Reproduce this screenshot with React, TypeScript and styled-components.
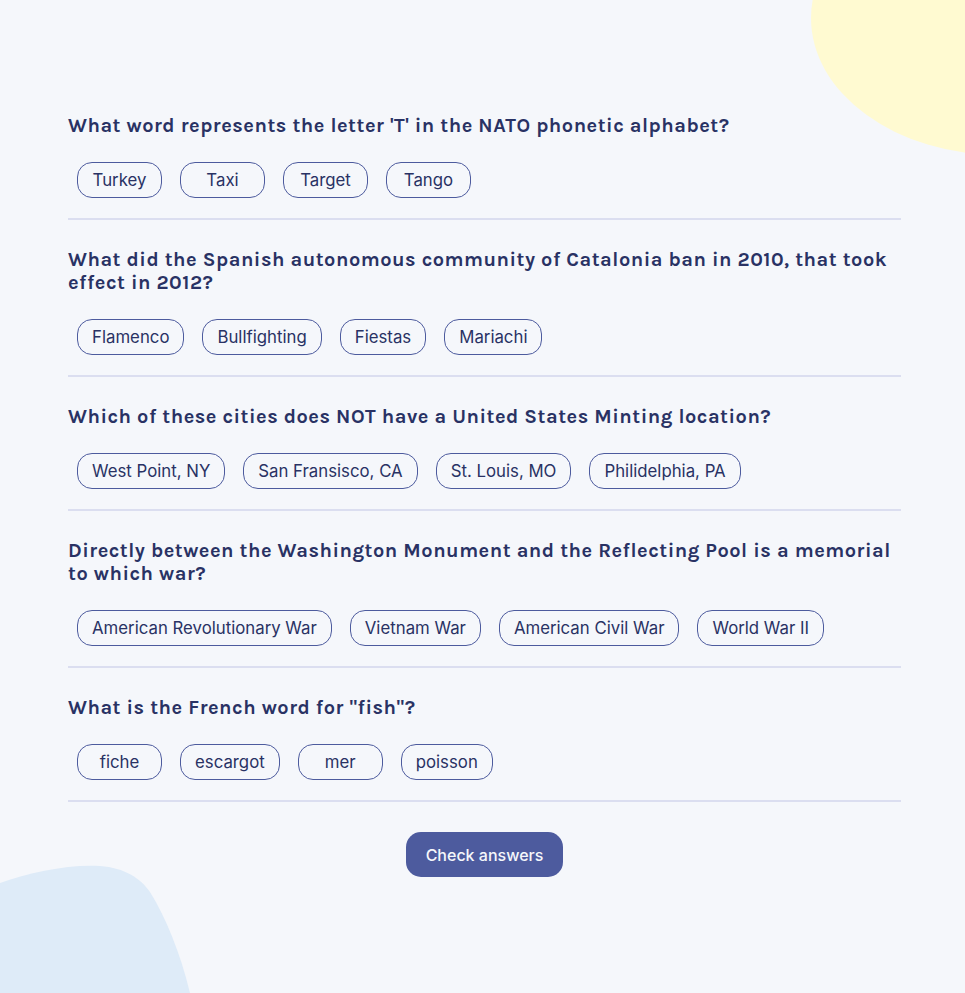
import React from "react";
import styled, { createGlobalStyle } from "styled-components";

const GlobalStyle = createGlobalStyle`
  html, body {
    margin: 0;
    padding: 0;
    background: #F5F7FB;
  }
  * { box-sizing: border-box; }
`;

const Page = styled.div`
  position: relative;
  width: 965px;
  height: 993px;
  overflow: hidden;
  background: #F5F7FB;
  font-family: Inter, "Noto Sans", sans-serif;
  color: #293264;
`;

const Blob = styled.svg<{ $corner: "tr" | "bl" }>`
  position: absolute;
  ${(p) => (p.$corner === "tr" ? "top: 0; right: 0;" : "bottom: 0; left: 0;")}
  pointer-events: none;
`;

const Quiz = styled.main`
  position: relative;
  width: 833px;
  margin-left: 68px;
  padding-top: 86px;
  display: flex;
  flex-direction: column;
`;

const Section = styled.section`
  padding: 28px 0 20px;
  border-bottom: 2px solid #DBDEF0;
`;

const Question = styled.h2`
  margin: 0 0 25px;
  font-family: "Karla", Lato, "Noto Sans", sans-serif;
  font-weight: 700;
  font-size: 20px;
  line-height: 23px;
  letter-spacing: 0.5px;
  color: #293264;
`;

const Answers = styled.div`
  display: flex;
  gap: 18px;
  padding-left: 9px;
`;

const Answer = styled.button`
  height: 36px;
  min-width: 85px;
  padding: 0 14px;
  border: 1px solid #4D5B9E;
  border-radius: 15px;
  background: transparent;
  font-family: Inter, sans-serif;
  font-size: 16.8px;
  font-weight: 400;
  color: #293264;
  cursor: pointer;
`;

const Footer = styled.div`
  display: flex;
  justify-content: center;
  padding-top: 30px;
`;

const CheckButton = styled.button`
  height: 45px;
  width: 157px;
  border: none;
  border-radius: 15px;
  background: #4D5B9E;
  color: #F5F7FB;
  font-family: Inter, sans-serif;
  font-size: 16px;
  font-weight: 500;
  cursor: pointer;
`;

const questions = [
  {
    q: "What word represents the letter 'T' in the NATO phonetic alphabet?",
    a: ["Turkey", "Taxi", "Target", "Tango"],
  },
  {
    q: "What did the Spanish autonomous community of Catalonia ban in 2010, that took effect in 2012?",
    a: ["Flamenco", "Bullfighting", "Fiestas", "Mariachi"],
  },
  {
    q: "Which of these cities does NOT have a United States Minting location?",
    a: ["West Point, NY", "San Fransisco, CA", "St. Louis, MO", "Philidelphia, PA"],
  },
  {
    q: "Directly between the Washington Monument and the Reflecting Pool is a memorial to which war?",
    a: ["American Revolutionary War", "Vietnam War", "American Civil War", "World War II"],
  },
  {
    q: 'What is the French word for "fish"?',
    a: ["fiche", "escargot", "mer", "poisson"],
  },
];

export default function App() {
  return (
    <Page>
      <GlobalStyle />
      <Blob $corner="tr" width="160" height="160" viewBox="805 0 160 160">
        <ellipse cx="1000" cy="18" rx="189" ry="137" fill="#FFFAD1" />
      </Blob>
      <Blob $corner="bl" width="200" height="130" viewBox="0 863 200 130">
        <path
          d="M0 883 C30 872 70 864 100 866 C125 868 140 878 150 892 C166 918 180 952 190 993 L0 993 Z"
          fill="#DEEBF8"
        />
      </Blob>
      <Quiz>
        {questions.map((item) => (
          <Section key={item.q}>
            <Question>{item.q}</Question>
            <Answers>
              {item.a.map((ans) => (
                <Answer key={ans}>{ans}</Answer>
              ))}
            </Answers>
          </Section>
        ))}
        <Footer>
          <CheckButton>Check answers</CheckButton>
        </Footer>
      </Quiz>
    </Page>
  );
}
